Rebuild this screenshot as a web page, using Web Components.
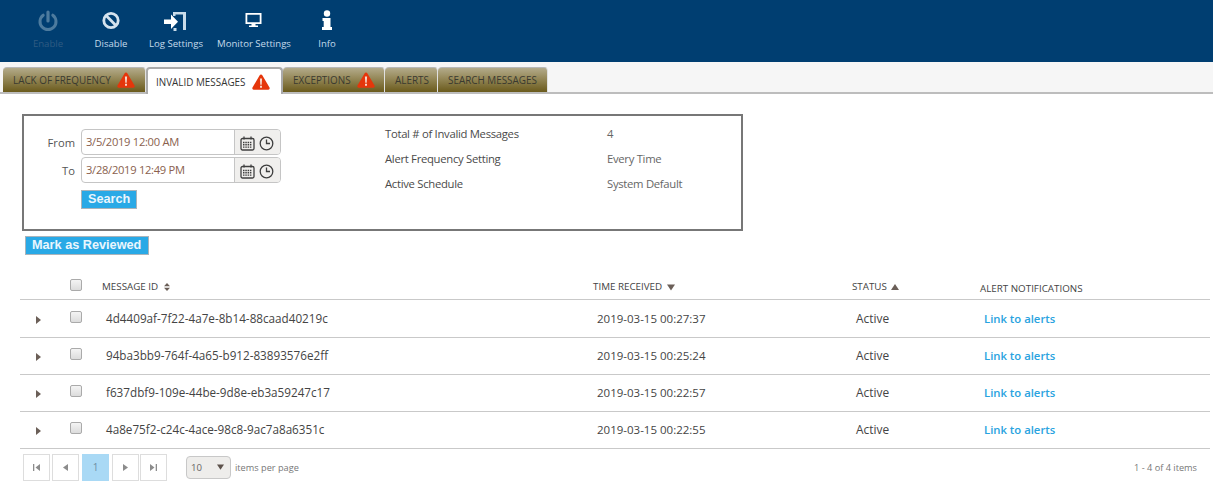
<!DOCTYPE html>
<html><head><meta charset="utf-8"><title>Invalid Messages</title>
<style>
html,body{margin:0;padding:0;background:#fff}
body{font-family:"Open Sans","Noto Sans",sans-serif;color:#444;width:1213px;height:493px;overflow:hidden}
</style></head><body>
<app-toolbar>
  <tool-btn label="Enable" icon="power" disabled style="width:48px;margin-left:24px"></tool-btn>
  <tool-btn label="Disable" icon="ban" style="width:48px;margin-left:15px"></tool-btn>
  <tool-btn label="Log Settings" icon="login" style="width:54px;margin-left:14px"></tool-btn>
  <tool-btn label="Monitor Settings" icon="monitor" style="width:74px;margin-left:14px"></tool-btn>
  <tool-btn label="Info" icon="info" style="width:18px;margin-left:27px"></tool-btn>
</app-toolbar>
<tab-bar>
  <tab-item w="143" warn>LACK OF FREQUENCY</tab-item>
  <tab-item w="137" warn active>INVALID MESSAGES</tab-item>
  <tab-item w="102" warn>EXCEPTIONS</tab-item>
  <tab-item w="53">ALERTS</tab-item>
  <tab-item w="110">SEARCH MESSAGES</tab-item>
</tab-bar>
<filter-box>
  <date-field slot="dates" label="From" value="3/5/2019 12:00 AM"></date-field>
  <date-field slot="dates" label="To" value="3/28/2019 12:49 PM"></date-field>
  <blue-btn slot="dates" style="margin:7px 0 0 57px">Search</blue-btn>
  <info-row slot="info" name="Total # of Invalid Messages" value="4"></info-row>
  <info-row slot="info" name="Alert Frequency Setting" value="Every Time"></info-row>
  <info-row slot="info" name="Active Schedule" value="System Default"></info-row>
</filter-box>
<blue-btn style="margin:5px 0 0 25px;padding-right:7px">Mark as Reviewed</blue-btn>
<message-grid>
  <grid-head></grid-head>
  <grid-row first mid="4d4409af-7f22-4a7e-8b14-88caad40219c" time="2019-03-15 00:27:37" h="38"></grid-row>
  <grid-row mid="94ba3bb9-764f-4a65-b912-83893576e2ff" time="2019-03-15 00:25:24" h="37"></grid-row>
  <grid-row mid="f637dbf9-109e-44be-9d8e-eb3a59247c17" time="2019-03-15 00:22:57" h="37"></grid-row>
  <grid-row mid="4a8e75f2-c24c-4ace-98c8-9ac7a8a6351c" time="2019-03-15 00:22:55" h="37"></grid-row>
</message-grid>
<grid-pager></grid-pager>
<script>
const ICONS={
power:'<path d="M12 3v9" stroke-width="3.2" stroke-linecap="round" fill="none"/><path d="M7.2 6.2a8 8 0 1 0 9.600 0" fill="none" stroke-width="3" stroke-linecap="round"/>',
ban:'<g stroke="#d5e3ee"><circle cx="12" cy="11.500" r="7.200" fill="none" stroke-width="2.800"/><path d="M6.800 6.300l10.400 10.400" stroke-width="2.800"/></g>',
login:'<path d="M0 10.500h7V5.500l7 7.200-7 7.200v-5H0z" stroke="none"/><path fill="#c9dcea" stroke="none" d="M9 3h13v18h-3V5.500h-7.500V7H9zM9.500 19h3v3h-3z"/>',
monitor:'<path fill-rule="evenodd" stroke="none" d="M3.500 4h16v11h-6v1.500h2.500V18H7v-1.500h2.500V15h-6zM5.300 5.800v7.400h12.400V5.800z"/>',
info:'<circle cx="12" cy="4.500" r="3.200" stroke="none"/><path stroke="none" d="M7.500 9h8v9H17v3H7v-3h1.700v-6H7.500z"/>'};
function def(name,css,html){
  customElements.define(name,class extends HTMLElement{
    connectedCallback(){
      if(this.shadowRoot)return;
      const r=this.attachShadow({mode:'open'});
      r.innerHTML='<style>'+css+'</style>'+(typeof html==='function'?html(this):html);
    }
  });
}
def('app-toolbar',':host{display:flex;height:62px;background:#003e71;box-sizing:border-box}','<slot></slot>');
def('tool-btn',`:host{display:flex;flex-direction:column;align-items:center;flex:none;color:#c4dbeb;font-size:9.600px}
 svg{width:24px;height:24px;margin-top:9px;fill:#fff;stroke:#fff;display:block}
 span{white-space:nowrap;margin-top:4px;line-height:14px}
 :host([disabled]){color:#2f5b82}
 :host([disabled]) svg{fill:#4d7b9e;stroke:#4d7b9e}`,
 e=>`<svg viewBox="0 0 24 24">${ICONS[e.getAttribute('icon')]}</svg><span>${e.getAttribute('label')}</span>`);
def('tab-bar',':host{display:flex;height:32px;background:#f6f6f6;box-sizing:border-box;padding:5px 0 0 3px;border-bottom:2px solid #bdbdbd}','<slot></slot>');
def('tab-item',`:host{display:flex;align-items:center;box-sizing:border-box;height:25px;padding-left:10px;gap:6px;font-size:9.900px;color:#3a3a30;white-space:nowrap;
 background:linear-gradient(#b3ab8b,#9b8f62 35%,#6a5a1c);border-radius:4px 4px 0 0;border-top:1px solid #b9b9b9;border-right:1px solid #e0e0e0}
 :host([active]){background:#fff;color:#333;height:27px;border:2px solid #aaa;border-bottom:0;padding-left:8px;margin-bottom:-2px;gap:6px}
 svg{width:18px;height:16px;display:block}`,
 e=>{e.style.width=e.getAttribute('w')+'px';return '<slot></slot>'+(e.hasAttribute('warn')?'<svg viewBox="0 0 18 16"><path d="M9 .5a1.500 1.500 0 0 1 1.300.8l7.200 12.300a1.400 1.400 0 0 1-1.200 2.100H1.700a1.400 1.400 0 0 1-1.200-2.100L7.700 1.300A1.500 1.500 0 0 1 9 .5z" fill="#e5360b"/><path d="M7.900 4.500h2.200l-.4 6.300H8.300zM8 11.800h2v2H8z" fill="#f6d9cc"/></svg>':'')});
def('filter-box',`:host{display:flex;box-sizing:border-box;width:721px;height:117px;margin:20px 0 0 22px;border:2px solid #777;padding:13px 0 0 0}
 .d{width:257px;flex:none}.i{margin-left:104px;flex:1;margin-top:-8px}`,
 '<div class="d"><slot name="dates"></slot></div><div class="i"><slot name="info"></slot></div>');
def('date-field',`:host{display:flex;align-items:center;height:26px;margin-bottom:2px;font-size:11.200px;color:#555}
 label{width:57px;text-align:right;padding-right:6px;box-sizing:border-box;flex:none}
 .w{display:flex;width:200px;height:26px;box-sizing:border-box;border:1px solid #c5c5c5;border-radius:4px;overflow:hidden}
 .v{width:152px;box-sizing:border-box;padding-left:4px;font-size:11.200px;letter-spacing:-.3px;line-height:24px;color:#8a5f4e;white-space:nowrap}
 .b{flex:1;background:#f0efed;border-left:1px solid #c5c5c5;display:flex;align-items:center;padding:2px 0 0 5px;gap:4px}
 svg{width:15px;height:15px;display:block}`,
 e=>`<label>${e.getAttribute('label')}</label><div class="w"><div class="v">${e.getAttribute('value')}</div><div class="b">
 <svg viewBox="0 0 15 15" fill="none" stroke="#3f3f3f"><rect x="1" y="2.500" width="13" height="11.500" rx="1.500" stroke-width="1.300"/><path d="M4 .5v3M11 .5v3" stroke-width="1.300"/><path d="M3 6.500h9M3 8.800h9M3 11.100h9" stroke-width="1.400" stroke-dasharray="1.500 .8"/></svg>
 <svg viewBox="0 0 15 15" fill="none" stroke="#3f3f3f" stroke-width="1.300"><circle cx="7.500" cy="7.500" r="6.300"/><path d="M7.500 3.500v4h3.500"/></svg></div></div>`);
def('blue-btn',`:host{display:table;background:#29a9e6;border:1px solid #a9b4bb;color:#eaf6fd;font:bold 12.700px/17px "Liberation Sans",sans-serif;padding:0 6px;height:17px}`,'<slot></slot>');
def('info-row',`:host{display:flex;height:25px;align-items:center;font-size:11.300px;letter-spacing:-.3px;color:#555;white-space:nowrap}
 b{font-weight:400;width:222px;flex:none;color:#4a4a4a}span{color:#666}`,
 e=>`<b>${e.getAttribute('name')}</b><span>${e.getAttribute('value')}</span>`);
const COLS='grid-template-columns:38px 40px 491px 259px 128px 234px';
def('message-grid',':host{display:block;margin:0 3px 0 20px;width:1190px}','<slot></slot>');
const CB='<i class="cb"></i>';
const CBCSS='.cb{display:block;width:10px;height:10px;border:1px solid #aaa;border-radius:2px;background:linear-gradient(#f4f4f4,#dcdcdc);margin:0 0 0 12px}';
def('grid-head',`:host{display:grid;${COLS};height:45px;box-sizing:border-box;border-bottom:1px solid #c9c9c9;font-size:9.800px;color:#444;white-space:nowrap}
 ${CBCSS} .cb{margin-top:24px}
 div{padding:25px 0 0 4px;line-height:13px}.a{padding-top:27px}
 svg{width:8px;height:8px;margin-left:2px;fill:#6b5f58;vertical-align:-1px}`,
 `<div></div><div style="padding:0">${CB}</div>
 <div>MESSAGE ID <svg viewBox="0 0 8 8"><path d="M4 0l3 3.300H1zM4 8L1 4.700h6z"/></svg></div>
 <div>TIME RECEIVED <svg viewBox="0 0 8 8"><path d="M0 1.500h8L4 7.500z"/></svg></div>
 <div>STATUS <svg viewBox="0 0 8 8"><path d="M0 7h8L4 1z"/></svg></div>
 <div class="a">ALERT NOTIFICATIONS</div>`);
def('grid-row',`:host{display:grid;${COLS};box-sizing:border-box;border-bottom:1px solid #c9c9c9;font-size:11.500px;color:#444;white-space:nowrap;--o:0px}
 :host([first]){--o:1px}
 ${CBCSS} .cb{margin-top:calc(10px + var(--o))}
 div{padding:calc(10px + var(--o)) 0 0 8px;line-height:15px}
 .i{font-size:11.700px}.st{font-size:11.900px}
 .e{padding:0}.e svg{display:block;width:5px;height:8px;margin:calc(15px + var(--o)) 0 0 16px;fill:#6b5f58}
 .c{padding:0}a{color:#29a3e0;font-weight:600;font-size:11.300px;text-decoration:none}`,
 e=>{e.style.height=e.getAttribute('h')+'px';return `<div class="e"><svg viewBox="0 0 5 8"><path d="M0 0l5 4-5 4z"/></svg></div><div class="c">${CB}</div>
 <div class="i">${e.getAttribute('mid')}</div><div>${e.getAttribute('time')}</div><div class="st">Active</div><div><a href="#">Link to alerts</a></div>`});
def('grid-pager',`:host{display:flex;align-items:center;margin:4px 3px 0 23px;width:1187px;height:28px;font-size:9.200px;color:#777}
 .p{width:27px;height:27px;box-sizing:border-box;border:1px solid #ddd;display:flex;align-items:center;justify-content:center;font-size:10px;color:#6f8fa3}
 .p.on{background:#a9d9f5;border-color:#a9d9f5}
 .p svg{width:9px;height:9px;fill:#8c8c8c}
 .s{margin-left:19px;width:45px;height:23px;box-sizing:border-box;border:1px solid #c8c8c8;border-radius:4px;background:#eeedeb;display:flex;align-items:center;padding-left:4px;justify-content:space-between;font-size:9.600px;color:#666}
 .s svg{width:7px;height:6px;fill:#5d524c;margin-right:6px}
 .t{margin-left:4px}.r{margin-left:auto;margin-right:13px}`,
 `<div class="p"><svg viewBox="0 0 9 9"><path d="M1 1h1.300v7H1zM8 1v7L3.500 4.500z"/></svg></div>
 <div class="p" style="margin-left:2px"><svg viewBox="0 0 9 9"><path d="M7 1v7L2 4.500z"/></svg></div>
 <div class="p on" style="margin-left:3px">1</div>
 <div class="p" style="margin-left:3px"><svg viewBox="0 0 9 9"><path d="M2 1v7l5-3.500z"/></svg></div>
 <div class="p" style="margin-left:1px"><svg viewBox="0 0 9 9"><path d="M1 1v7l4.500-3.500zM6.700 1H8v7H6.700z"/></svg></div>
 <div class="s">10<svg viewBox="0 0 8 6"><path d="M0 0h8L4 6z"/></svg></div><span class="t">items per page</span><span class="r">1 - 4 of 4 items</span>`);
</script>
</body></html>
